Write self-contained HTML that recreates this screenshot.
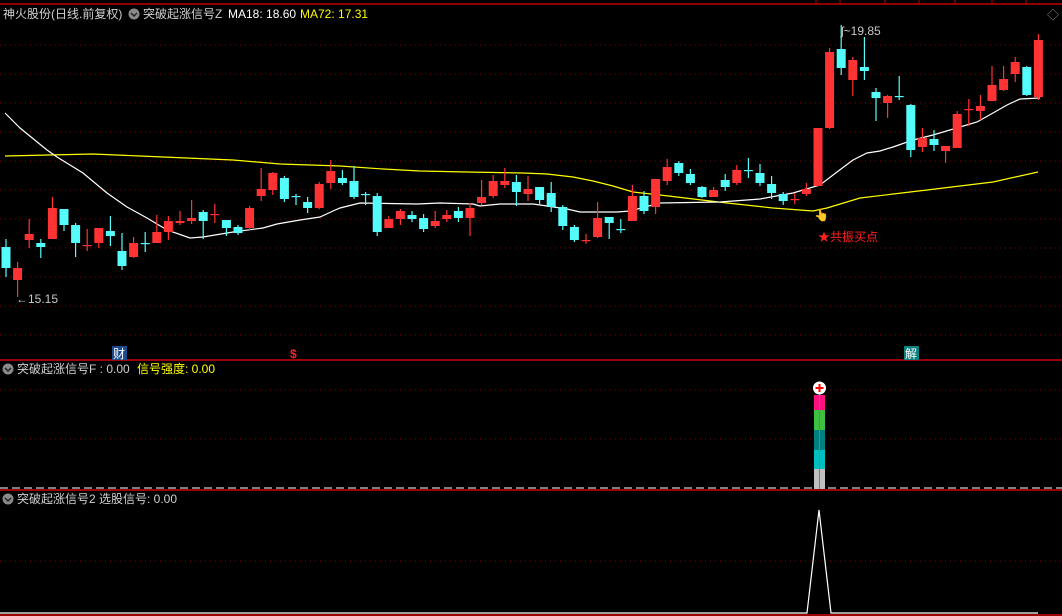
<!DOCTYPE html>
<html><head><meta charset="utf-8">
<style>
html,body{margin:0;padding:0;background:#000;width:1062px;height:616px;overflow:hidden}
svg{display:block}
text{font-family:"Liberation Sans","Noto Sans CJK SC",sans-serif;font-size:12px}
</style></head><body>
<svg id="s" width="1062" height="616" xmlns="http://www.w3.org/2000/svg">
<rect width="1062" height="616" fill="#000"/>
<g id="grid"></g>
<line x1="0" y1="4" x2="1062" y2="4" stroke="#c00000" stroke-width="1.5"/>
<g stroke="#c00000"><line x1="816" y1="0" x2="816" y2="4"/><line x1="840" y1="0" x2="840" y2="4"/><line x1="885" y1="0" x2="885" y2="4"/><line x1="919" y1="0" x2="919" y2="4"/><line x1="955" y1="0" x2="955" y2="4"/><line x1="992" y1="0" x2="992" y2="4"/><line x1="1026" y1="0" x2="1026" y2="4"/></g>
<line x1="0" y1="360" x2="1062" y2="360" stroke="#d00000" stroke-width="1.5"/>
<line x1="0" y1="490" x2="1062" y2="490" stroke="#d00000" stroke-width="1.5"/>
<line x1="0" y1="615" x2="1062" y2="615" stroke="#d00000" stroke-width="1.5"/>
<line x1="0" y1="488" x2="1062" y2="488" stroke="#fff" stroke-dasharray="8,4"/>
<polyline fill="none" stroke="#ffff00" stroke-width="1.2" points="5,156 93,154 140,156 233,160 280,164 340,166 383,169 420,171 467,172 523,173 547,174 573,177 593,181 613,186 633,192 660,195 727,203 773,208 813,211 827,208 860,198 927,190 993,182 1038,172"/>
<polyline fill="none" stroke="#fff" stroke-width="1.2" points="5,113 20,128 47,150 57,157 83,173 107,193 127,207 147,218 167,230 190,238 203,237 233,232 263,228 277,224 300,220 320,217 333,211 340,208 360,203 417,204 440,203 473,204 480,206 500,204 533,204 547,206 567,209 580,212 617,212 630,211 660,203 720,202 760,199 793,193 820,185 837,172 853,160 867,153 880,151 893,147 913,140 933,135 960,127 977,122 993,113 1007,105 1020,99 1040,98"/>
<g id="c"></g>
<text x="16" y="303" fill="#c8c8c8">←15.15</text>
<text x="841" y="35" fill="#c8c8c8">ʃ~19.85</text>
<text x="818" y="241" fill="#ff2020">★共振买点</text>
<text x="814" y="219" font-size="14">👆</text>
<rect x="112" y="346" width="15" height="14" fill="#1c4a8a"/>
<text x="113" y="358" fill="#fff">财</text>
<text x="290" y="358" fill="#ff2020" font-weight="bold">$</text>
<rect x="904" y="346" width="15" height="14" fill="#0a8080"/>
<text x="905" y="358" fill="#fff">解</text>
<text x="3" y="18" fill="#d0d0d0">神火股份(日线.前复权)</text>
<circle cx="134" cy="14" r="5.5" fill="#8a8a8a"/><path d="M131 13 l3 3 l3 -3" stroke="#222" fill="none" stroke-width="1.5"/>
<text x="143" y="18" fill="#d0d0d0">突破起涨信号Z</text>
<text x="228" y="18" fill="#fff">MA18: 18.60</text>
<text x="300" y="18" fill="#ffff00">MA72: 17.31</text>
<text x="1047" y="19" fill="#888">◇</text>
<circle cx="8" cy="369" r="5.5" fill="#8a8a8a"/><path d="M5 368 l3 3 l3 -3" stroke="#222" fill="none" stroke-width="1.5"/>
<text x="17" y="373" fill="#d0d0d0">突破起涨信号F : 0.00</text>
<text x="137" y="373" fill="#ffff00">信号强度: 0.00</text>
<circle cx="8" cy="499" r="5.5" fill="#8a8a8a"/><path d="M5 498 l3 3 l3 -3" stroke="#222" fill="none" stroke-width="1.5"/>
<text x="17" y="503" fill="#d0d0d0">突破起涨信号2 选股信号: 0.00</text>
<rect x="814" y="395" width="11" height="15" fill="#ff1080"/>
<rect x="814" y="410" width="11" height="20" fill="#40c040"/>
<rect x="814" y="430" width="11" height="20" fill="#008080"/>
<rect x="814" y="450" width="11" height="19" fill="#00c0c0"/>
<rect x="814" y="469" width="11" height="20" fill="#c0c0c0"/>
<line x1="819.5" y1="392" x2="819.5" y2="489" stroke="#ff4040"/>
<circle cx="819.5" cy="388" r="6.5" fill="#fff"/>
<path d="M815.5 388 h8 M819.5 384 v8" stroke="#ff0000" stroke-width="2"/>
<polyline fill="none" stroke="#fff" stroke-width="1.2" points="0,613 807,613 819,510 831,613 1038,613"/>
</svg>
<script>
var g=document.getElementById('grid'),h='';
function dl(y){h+='<line x1="0" y1="'+y+'" x2="1062" y2="'+y+'" stroke="#8a0000" stroke-dasharray="1,4"/>';}
for(var y=45;y<=335;y+=29)dl(y);
dl(390);dl(439);dl(561);
g.innerHTML=h;
var d=[[247,268,239,277,'c'],[268,280,262,297,'r'],[234,240,219,248,'r'],[243,247,239,258,'c'],[208,239,197,239,'r'],[209,225,209,231,'c'],[225,243,223,257,'c'],[245,246,229,251,'r'],[228,243,228,248,'r'],[231,236,216,246,'c'],[251,266,233,270,'c'],[243,257,237,258,'r'],[243,244,232,252,'c'],[232,243,215,243,'r'],[221,232,216,240,'r'],[221,223,211,225,'r'],[218,221,200,224,'r'],[212,221,210,239,'c'],[214,215,204,223,'r'],[220,228,220,236,'c'],[227,233,225,235,'c'],[208,228,206,230,'r'],[189,196,168,201,'r'],[173,190,172,195,'r'],[178,199,176,202,'c'],[196,197,194,205,'c'],[202,208,197,213,'c'],[184,208,182,209,'r'],[171,183,160,189,'r'],[178,183,170,185,'c'],[181,197,166,199,'c'],[194,195,192,205,'c'],[196,232,193,236,'c'],[219,228,216,228,'r'],[211,219,209,225,'r'],[215,219,211,222,'c'],[218,229,214,232,'c'],[221,226,211,228,'r'],[215,219,210,222,'r'],[211,218,207,222,'c'],[208,218,203,236,'r'],[197,203,180,205,'r'],[181,196,175,198,'r'],[181,185,168,188,'r'],[182,192,175,206,'c'],[189,194,176,201,'r'],[187,200,187,205,'c'],[193,207,182,212,'c'],[207,226,205,230,'c'],[227,240,225,242,'c'],[240,241,234,244,'r'],[218,237,202,238,'r'],[217,223,217,239,'c'],[229,230,219,233,'c'],[196,221,185,221,'r'],[196,211,191,214,'c'],[179,207,179,214,'r'],[167,181,159,185,'r'],[163,173,161,176,'c'],[174,183,169,185,'c'],[187,197,186,198,'c'],[190,197,187,197,'r'],[180,187,174,191,'c'],[170,183,165,185,'r'],[170,171,158,178,'c'],[173,183,164,186,'c'],[184,193,176,199,'c'],[194,201,192,205,'c'],[199,200,193,204,'r'],[189,194,183,196,'r'],[128,186,128,186,'r'],[52,128,48,129,'r'],[49,68,25,75,'c'],[60,80,57,96,'r'],[67,71,37,80,'c'],[92,98,88,121,'c'],[96,103,95,118,'r'],[96,97,76,100,'c'],[105,150,104,157,'c'],[138,147,128,152,'r'],[139,145,130,151,'c'],[146,151,146,163,'r'],[114,148,111,148,'r'],[109,110,99,126,'r'],[106,111,95,120,'r'],[85,101,66,101,'r'],[79,90,66,91,'r'],[62,74,57,82,'r'],[67,95,66,96,'c'],[40,97,34,100,'r']];
var s='';
for(var i=0;i<d.length;i++){var x=6+11.6*i,c=d[i],col=c[4]=='r'?'#ff3333':'#55fcfc';
s+='<line x1="'+x+'" y1="'+c[2]+'" x2="'+x+'" y2="'+c[3]+'" stroke="'+col+'" stroke-width="1.2"/>';
var hh=Math.max(c[1]-c[0],1.2);
s+='<rect x="'+(x-4.5)+'" y="'+c[0]+'" width="9" height="'+hh+'" fill="'+col+'"/>';}
document.getElementById('c').innerHTML=s;
</script>
</body></html>
